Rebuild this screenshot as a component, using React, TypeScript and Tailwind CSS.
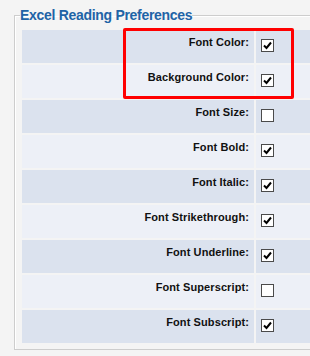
const rows = [
  { label: "Font Color:", checked: true },
  { label: "Background Color:", checked: true },
  { label: "Font Size:", checked: false },
  { label: "Font Bold:", checked: true },
  { label: "Font Italic:", checked: true },
  { label: "Font Strikethrough:", checked: true },
  { label: "Font Underline:", checked: true },
  { label: "Font Superscript:", checked: false },
  { label: "Font Subscript:", checked: true },
];

const CheckBox = ({ checked }: { checked: boolean }) => (
  <span className="w-[13px] h-[13px] border border-[#4b4b4b] bg-white flex items-center justify-center">
    {checked && (
      <svg width="11" height="11" viewBox="0 0 11 11">
        <path d="M2 5.5 L4.5 8 L9 2.5" fill="none" stroke="#000" strokeWidth="2" />
      </svg>
    )}
  </span>
);

export default function App() {
  return (
    <div className="relative w-[310px] h-[356px] overflow-hidden bg-[#f4f4f4] font-['Liberation_Sans',Arial,sans-serif]">
      <fieldset className="ml-[14px] mt-[7px] w-[320px] border border-[#cdcdcd] shadow-[inset_1px_1px_0_#fff] pl-[7px] pt-[7px] pb-[6px]">
        <legend className="ml-[-2px] px-0 text-[14px] leading-[16px] font-bold tracking-[-0.3px] text-[#2163a6]">
          Excel Reading Preferences
        </legend>
        <div className="flex flex-col gap-[2px]">
          {rows.map((row, i) => (
            <div key={row.label} className="grid grid-cols-[232px_1fr] gap-[2px] h-[33px]">
              <div
                className={`flex items-center justify-end pr-[5px] pb-[8px] text-[11px] tracking-[0.1px] font-bold text-[#111] ${
                  i % 2 === 0 ? "bg-[#dbe2ee]" : "bg-[#edf0f7]"
                }`}
              >
                {row.label}
              </div>
              <div
                className={`flex items-center pl-[5px] pb-[2px] ${
                  i % 2 === 0 ? "bg-[#dbe2ee]" : "bg-[#edf0f7]"
                }`}
              >
                <CheckBox checked={row.checked} />
              </div>
            </div>
          ))}
        </div>
      </fieldset>
      <div className="absolute left-[123px] top-[28px] w-[171px] h-[71px] border-[3px] border-[#ff0000] rounded-[2px]" />
    </div>
  );
}
